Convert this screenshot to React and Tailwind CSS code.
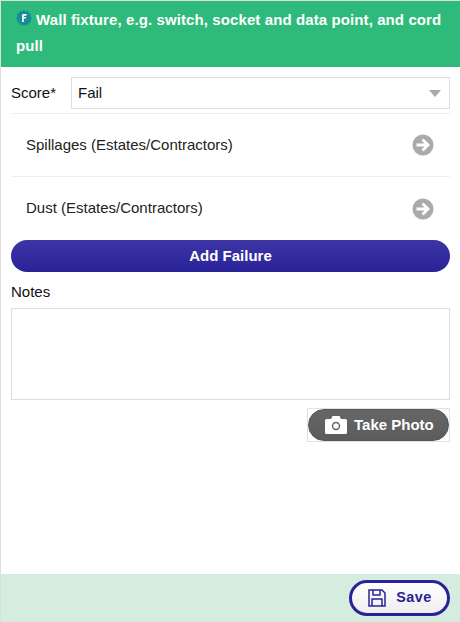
import React from "react";

function ArrowCircle() {
  return (
    <svg width="22" height="22" viewBox="0 0 22 22" className="mr-[16px]">
      <circle cx="11" cy="11" r="10.5" fill="#aaaaaa" />
      <path d="M4.5 11h10.5M10.5 5.5L16 11l-5.500 5.500" fill="none" stroke="#ffffff" strokeWidth="2.8" />
    </svg>
  );
}

function Row({ label, last }) {
  return (
    <div className={`flex h-[63px] items-center justify-between pl-[15px] ${last ? "" : "border-b border-[#eeeeee]"}`}>
      <span className="text-[15px] text-[#222222]">{label}</span>
      <ArrowCircle />
    </div>
  );
}

export default function App() {
  return (
    <div className="flex h-[622px] w-[460px] flex-col border-t border-l border-[#dddddd] bg-white font-['Liberation_Sans',Arial,sans-serif] text-[#111111]">
      {/* Header */}
      <div className="h-[66px] bg-[#2dba7a] pt-[6px] pl-[15px] pr-[10px] text-[15px] leading-[26px] font-bold tracking-[0.1px] text-white">
        <svg width="16" height="16" viewBox="0 0 16 16" className="mr-[4px] inline-block align-[-1px]">
          <path d="M8 0l1.700 1.500L12 1l.9 2.100 2.100.9-.5 2.300L16 8l-1.500 1.700.5 2.300-2.100.9-.9 2.100-2.300-.5L8 16l-1.700-1.500L4 15l-.9-2.100L1 12l.5-2.300L0 8l1.500-1.700L1 4l2.100-.9L4 1l2.300.5z" fill="#178c9b" />
          <path d="M6 12V5.600C6 4.400 6.800 4 8 4h2.500v1.700H8.400c-.4 0-.6.2-.6.6v.6H10v1.600H7.800V12z" fill="#ffffff" />
        </svg>
        Wall fixture, e.g. switch, socket and data point, and cord pull
      </div>

      <div className="flex flex-1 flex-col px-[10px]">
        {/* Score */}
        <div className="mt-[10px] flex items-center">
          <label className="w-[60px] text-[15px]">Score*</label>
          <div className="flex h-[32px] flex-1 items-center justify-between border border-[#dddddd] pr-[8px] pl-[6px] text-[15px]">
            <span>Fail</span>
            <span className="h-0 w-0 border-x-[6.5px] border-t-[7px] border-x-transparent border-t-[#aaaaaa]" />
          </div>
        </div>

        {/* Failure rows */}
        <div className="mt-[4px] border-t border-[#eeeeee]">
          <Row label="Spillages (Estates/Contractors)" />
          <Row label="Dust (Estates/Contractors)" last />
        </div>

        <button className="h-[32px] w-full rounded-full bg-gradient-to-b from-[#3d35a5] to-[#2a2298] text-[15px] font-bold text-white">
          Add Failure
        </button>

        <label className="mt-[11px] text-[15px] leading-[18px]">Notes</label>
        <div className="mt-[7px] h-[92px] border border-[#dddddd]" />

        {/* Take photo */}
        <div className="mt-[8px] flex justify-end">
          <div className="border border-[#e2e2e2]">
            <button className="flex h-[32px] w-[141px] items-center rounded-full border border-[#555555] bg-gradient-to-b from-[#666666] to-[#5c5c5c] pl-[16px] text-[15px] font-bold text-white">
              <svg width="22" height="18" viewBox="0 0 22 18" className="mr-[7px]">
                <path d="M1.500 3H6l1.500-3h7L16 3h4.500A1.500 1.500 0 0 1 22 4.500v12a1.500 1.500 0 0 1-1.500 1.500h-19A1.500 1.500 0 0 1 0 16.500v-12A1.500 1.500 0 0 1 1.500 3z" fill="#ffffff" />
                <circle cx="11" cy="10" r="4.200" fill="#5a6470" />
                <circle cx="11" cy="10" r="2.800" fill="#ffffff" />
              </svg>
              Take Photo
            </button>
          </div>
        </div>
      </div>

      {/* Footer */}
      <div className="flex h-[48px] items-center justify-end bg-[#d5eddf] pr-[10px]">
        <button className="flex h-[36px] w-[101px] items-center justify-center rounded-full border-[3px] border-[#2a2298] bg-gradient-to-b from-white to-[#eeeeee] pl-[1px] text-[14.4px] font-bold tracking-[0.5px] text-[#2a2298]">
          <svg width="18" height="18" viewBox="0 0 18 18" fill="none" stroke="#2a2298" strokeWidth="1.500" className="mr-[10px]">
            <path d="M1 1h13l3 3v13H1z" />
            <path d="M5 1v5h7V1M4 17v-7h10v7" />
          </svg>
          Save
        </button>
      </div>
    </div>
  );
}
